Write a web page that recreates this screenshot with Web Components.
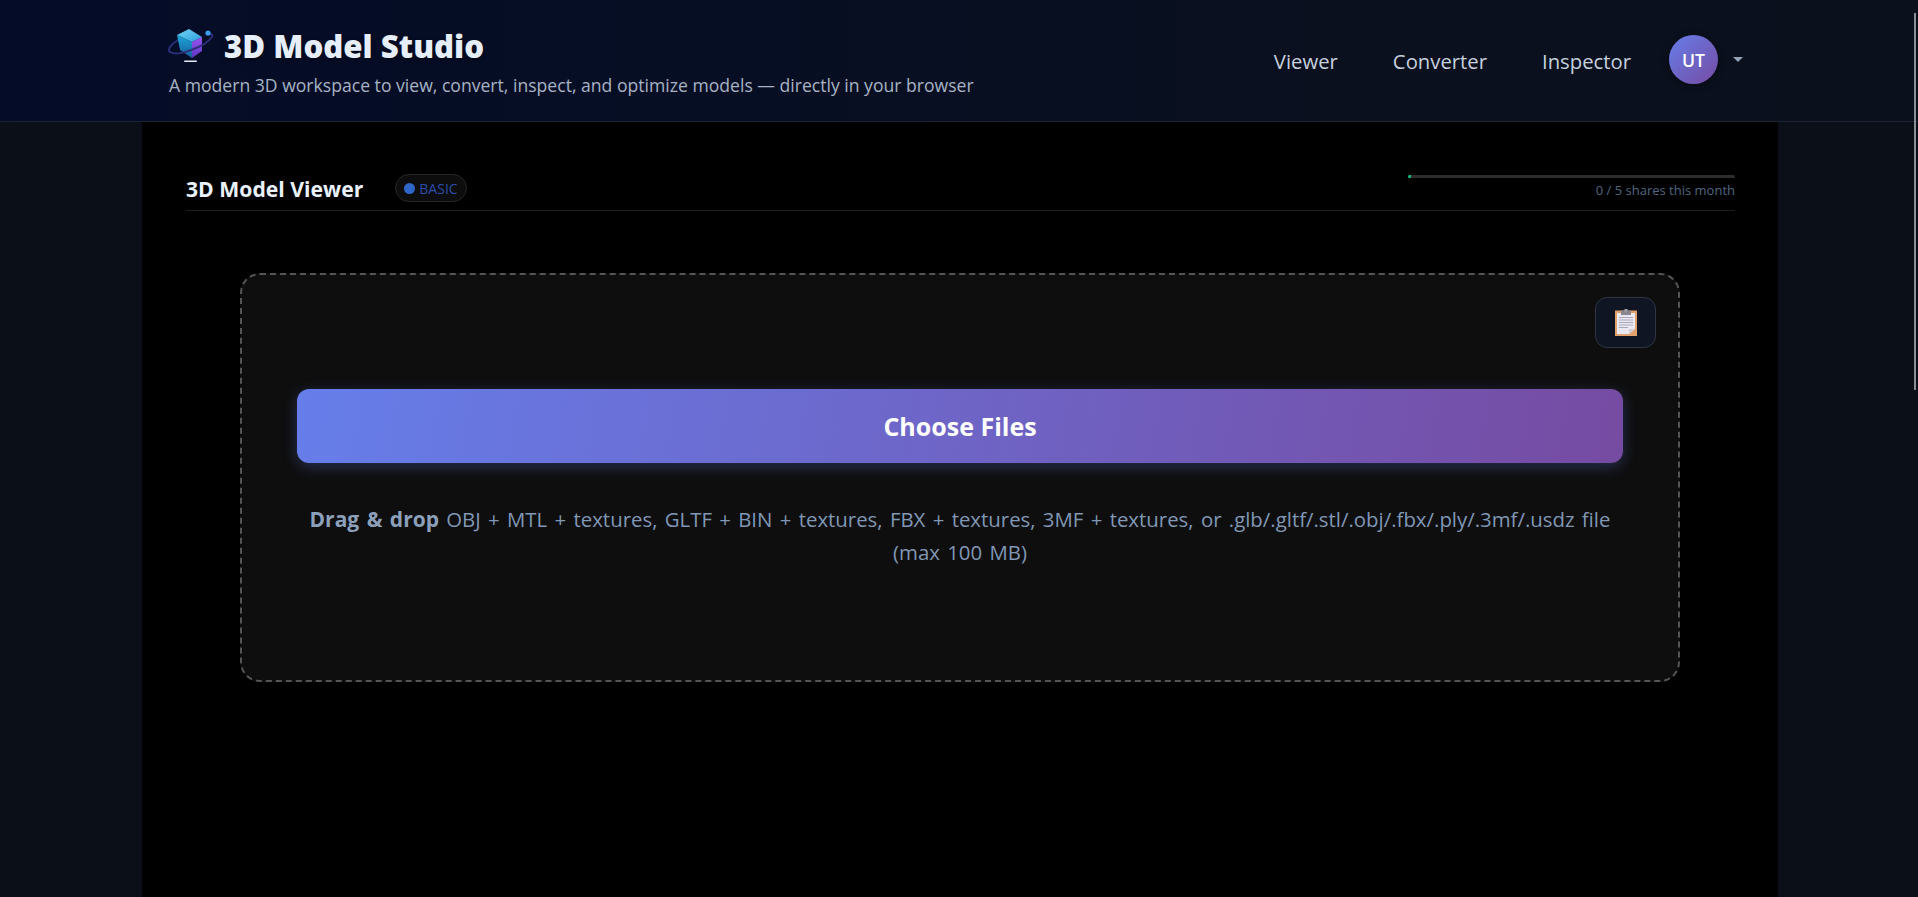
<!DOCTYPE html>
<html lang="en">
<head>
<meta charset="utf-8">
<title>3D Model Studio</title>
<style>
  html, body { margin: 0; height: 100%; overflow: hidden; }
  body {
    background: #0a0f18;
    font-family: "Open Sans", "Noto Sans", sans-serif;
    color: #e2e8f0;
  }
</style>
</head>
<body>
<app-shell>
  <site-header slot="header"></site-header>
  <viewer-panel></viewer-panel>
</app-shell>

<script>
// 顶栏图标
const LOGO_SVG = `
  <svg width="46" height="40" viewBox="0 0 46 40">
    <defs>
      <linearGradient id="top" x1="0" y1="0" x2="1" y2="1"><stop offset="0" stop-color="#6fd3f5"/><stop offset="1" stop-color="#2e9fdc"/></linearGradient>
      <linearGradient id="left" x1="0" y1="0" x2="0" y2="1"><stop offset="0" stop-color="#1aa6d8"/><stop offset="1" stop-color="#1b5c9c"/></linearGradient>
      <linearGradient id="right" x1="0" y1="0" x2="0" y2="1"><stop offset="0" stop-color="#9a55f2"/><stop offset="1" stop-color="#5c35c0"/></linearGradient>
    </defs>
    <path d="M10 14C3 18 -1 24 2 26" fill="none" stroke="#2b2f78" stroke-width="2" stroke-linecap="round"/>
    <path d="M21 3L34 11L24 16L9 9Z" fill="url(#top)"/>
    <path d="M9 9L24 16V32L12 24Z" fill="url(#left)"/>
    <path d="M24 16L34 11V25L24 32Z" fill="url(#right)"/>
    <path d="M2 26C9 31 37 21 44 11C45 9 44 8 42 8" fill="none" stroke="#2b2f78" stroke-width="2" stroke-linecap="round"/>
    <circle cx="40" cy="7" r="2.600" fill="#3b9df0"/>
    <rect x="16" y="34.500" width="13" height="1.600" rx=".8" fill="#e6ebf5"/>
  </svg>`;

const CLIPBOARD_SVG = `
  <svg width="22" height="27" viewBox="0 0 22 27">
    <rect x="0" y="1.500" width="22" height="25.500" fill="#e0a16c"/>
    <path d="M2 4H20V20L14 25H2Z" fill="#e9e8f2"/>
    <path d="M20 20L14 25V20Z" fill="#cfccd8"/>
    <rect x="6" y="1.500" width="10" height="4.500" fill="#8a8690"/>
    <rect x="9.500" y="0" width="3" height="2.500" fill="#a5a1aa"/>
    <path d="M4 8.500H18M4 11H18M4 13.500H18M4 16H18M4 18.500H13" stroke="#aaa8b8" stroke-width="1"/>
  </svg>`;

class AppShell extends HTMLElement {
  constructor() {
    super();
    this.attachShadow({ mode: 'open' });
    this.shadowRoot.innerHTML = `
      <style>
        :host { display: flex; flex-direction: column; height: 100vh; position: relative; }
        main { flex: 1; display: flex; min-height: 0; padding-left: 142px; }
        .thumb {
          position: absolute; top: 13px; right: 2px; width: 2px; height: 377px;
          background: #8a8d92;
        }
      </style>
      <slot name="header"></slot>
      <main><slot></slot></main>
      <div class="thumb"></div>
    `;
  }
}

class SiteHeader extends HTMLElement {
  constructor() {
    super();
    this.attachShadow({ mode: 'open' });
    this.shadowRoot.innerHTML = `
      <style>
        :host {
          display: flex; align-items: center; justify-content: space-between;
          box-sizing: border-box; height: 122px; padding: 0 175px 0 169px;
          background: linear-gradient(90deg, #040c28 0%, #060e24 35%, #0a101e 70%, #0a101c 100%);
          border-bottom: 1px solid #1c2433;
        }
        .brand { display: flex; flex-direction: column; gap: 7px; margin-top: 1px; }
        .title { display: flex; align-items: center; gap: 10px; }
        .logo { display: flex; margin-left: -1px; }
        h1 {
          margin: 0; font-size: 31.200px; line-height: 40px; font-weight: 800; color: #e6eef9;
          text-shadow: 0 2px 4px rgba(0,0,0,.4);
        }
        p { margin: 0; font-size: 17.600px; line-height: 24px; color: #a7b3c4; }
        nav { display: flex; align-items: center; margin-top: -2px; }
        a { font-size: 20.300px; color: #c6d0de; margin: 2px 55px 0 0; }
        a:nth-child(3) { margin-right: 38px; }
        .avatar {
          width: 49px; height: 49px; border-radius: 50%;
          background: linear-gradient(135deg, #667eea, #764ba2);
          display: flex; align-items: center; justify-content: center;
          color: #fff; font-weight: 600; font-size: 17.600px;
          box-shadow: 0 2px 8px rgba(0,0,0,.3);
        }
        .caret {
          width: 0; height: 0; margin-left: 15px;
          border-left: 5px solid transparent; border-right: 5px solid transparent;
          border-top: 5px solid #94a3b8;
        }
      </style>
      <div class="brand">
        <div class="title"><span class="logo">${LOGO_SVG}</span><h1>3D Model Studio</h1></div>
        <p>A modern 3D workspace to view, convert, inspect, and optimize models — directly in your browser</p>
      </div>
      <nav>
        <a>Viewer</a><a>Converter</a><a>Inspector</a>
        <div class="avatar">UT</div><div class="caret"></div>
      </nav>
    `;
  }
}

class ViewerPanel extends HTMLElement {
  constructor() {
    super();
    this.attachShadow({ mode: 'open' });
    this.shadowRoot.innerHTML = `
      <style>
        :host {
          display: block; box-sizing: border-box; width: 1636px; height: 100%;
          background: #000; padding: 52px 43px 0 44px;
        }
        .head {
          display: flex; align-items: center; justify-content: space-between;
          height: 28px; padding-bottom: 8px; border-bottom: 1px solid #1c1c1c;
        }
        .left { display: flex; align-items: center; gap: 32px; }
        h2 { margin: 0; font-size: 21.200px; font-weight: 700; color: #eaf1fb; }
      </style>
      <div class="head">
        <div class="left"><h2>3D Model Viewer</h2><plan-badge>BASIC</plan-badge></div>
        <share-usage used="0" total="5"></share-usage>
      </div>
      <drop-zone></drop-zone>
    `;
  }
}

class PlanBadge extends HTMLElement {
  constructor() {
    super();
    this.attachShadow({ mode: 'open' });
    this.shadowRoot.innerHTML = `
      <style>
        :host {
          display: inline-flex; align-items: center; gap: 4px; box-sizing: border-box;
          height: 28px; padding: 0 8px; border-radius: 14px;
          background: #0d0d0d; border: 1px solid #262626;
          font-size: 14px; color: #2b4cab;
        }
        i { width: 11px; height: 11px; border-radius: 50%; background: #2f66c9; }
      </style>
      <i></i><slot></slot>
    `;
  }
}

class ShareUsage extends HTMLElement {
  constructor() {
    super();
    this.attachShadow({ mode: 'open' });
    const used = this.getAttribute('used');
    const total = this.getAttribute('total');
    this.shadowRoot.innerHTML = `
      <style>
        :host { display: block; width: 327px; margin-top: -3px; text-align: right; }
        .bar { height: 3px; background: #2c2c2c; border-radius: 2px; overflow: hidden; margin-bottom: 4px; }
        .fill { width: 3px; height: 100%; background: #10b981; }
        span { display: block; font-size: 13px; line-height: 16px; color: #51657f; }
      </style>
      <div class="bar"><div class="fill"></div></div>
      <span>${used} / ${total} shares this month</span>
    `;
  }
}

class DropZone extends HTMLElement {
  constructor() {
    super();
    this.attachShadow({ mode: 'open' });
    this.shadowRoot.innerHTML = `
      <style>
        :host {
          display: block; box-sizing: border-box; position: relative;
          width: 1440px; height: 409px; margin: 62px 0 0 54px; padding: 114px 55px 0;
          background: #0e0e0e; border: 2px dashed #555; border-radius: 20px;
          text-align: center;
        }
        .paste {
          position: absolute; top: 22px; right: 22px; box-sizing: border-box;
          width: 61px; height: 51px; border-radius: 12px;
          background: #0f1523; border: 1px solid #2f3545;
          display: flex; align-items: center; justify-content: center;
        }
        button {
          display: block; width: 100%; height: 74px; border: 0; border-radius: 12px;
          background: linear-gradient(100deg, #667eea, #764ba2);
          color: #fff; font: 700 25px "Open Sans", "Noto Sans", sans-serif;
          box-shadow: 0 4px 15px rgba(102,126,234,.3);
        }
        p { margin: 40px -20px 0; font-size: 20.400px; line-height: 33px; word-spacing: 2px; color: #8097b5; }
        b { font-size: 21px; color: #8da0bb; }
      </style>
      <div class="paste">${CLIPBOARD_SVG}</div>
      <button>Choose Files</button>
      <p><b>Drag &amp; drop</b> OBJ + MTL + textures, GLTF + BIN + textures, FBX + textures, 3MF + textures, or .glb/.gltf/.stl/.obj/.fbx/.ply/.3mf/.usdz file<br>(max 100 MB)</p>
    `;
  }
}

customElements.define('app-shell', AppShell);
customElements.define('site-header', SiteHeader);
customElements.define('viewer-panel', ViewerPanel);
customElements.define('plan-badge', PlanBadge);
customElements.define('share-usage', ShareUsage);
customElements.define('drop-zone', DropZone);
</script>
</body>
</html>
